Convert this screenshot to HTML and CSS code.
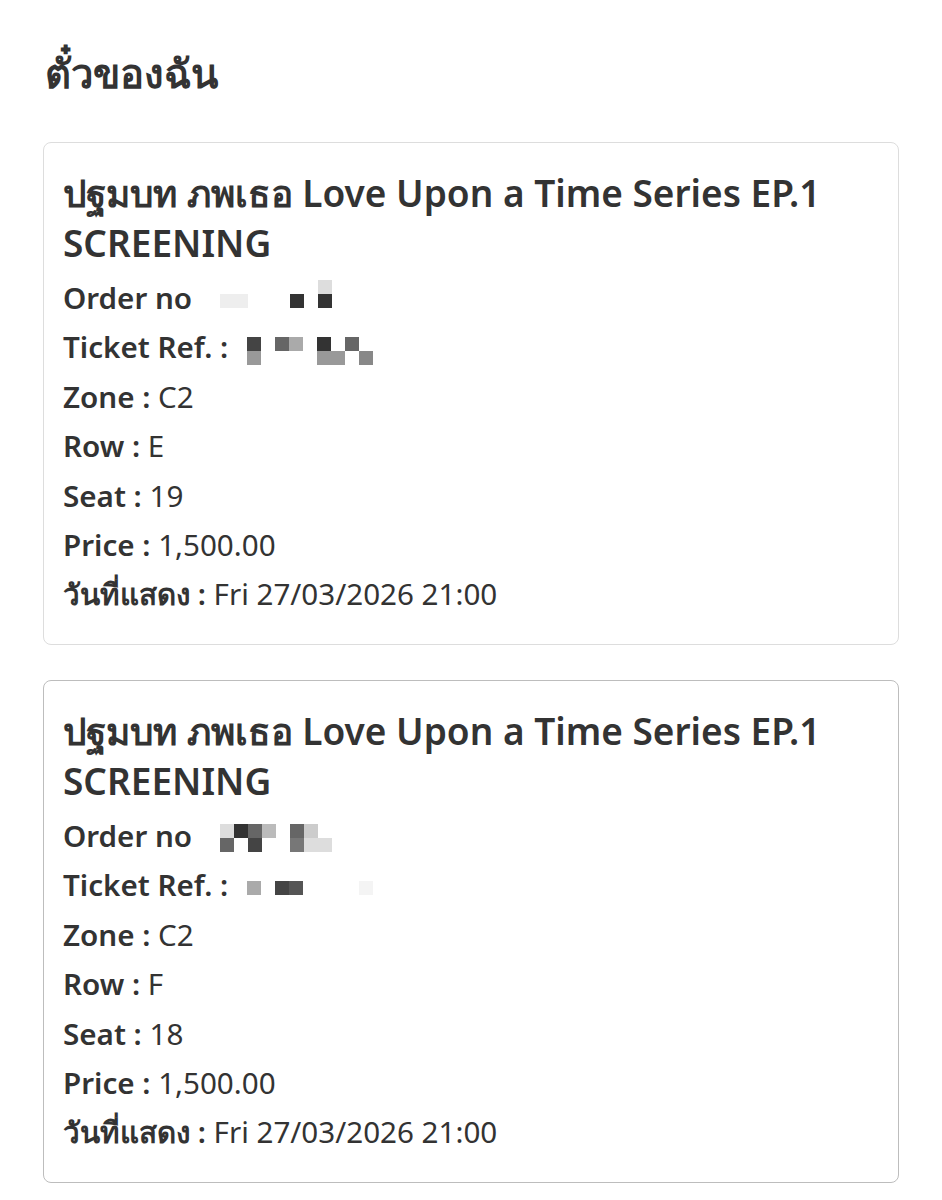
FILE: index.html
```html
<!DOCTYPE html>
<html lang="th">
<head>
<meta charset="utf-8">
<title>ตั๋วของฉัน</title>
<link rel="stylesheet" href="styles.css">
</head>
<body>
<main class="page">
  <h1 class="page-title">ตั๋วของฉัน</h1>

  <section class="ticket">
    <h2 class="ticket-title">ปฐมบท ภพเธอ Love Upon a Time Series EP.1 SCREENING</h2>
    <div class="row"><span class="label">Order no</span><span class="mosaic mosaic-order">
      <i></i><i></i><i></i><i></i><i></i><i></i><i></i><i class="g-d"></i>
      <i class="g-e"></i><i class="g-e"></i><i></i><i></i><i></i><i class="g-3"></i><i></i><i class="g-3"></i>
    </span></div>
    <div class="row"><span class="label">Ticket Ref. :</span><span class="mosaic mosaic-ref">
      <i class="g-4"></i><i></i><i class="g-6"></i><i class="g-a"></i><i></i><i class="g-3"></i><i></i><i class="g-6"></i><i></i>
      <i class="g-9"></i><i></i><i></i><i></i><i></i><i class="g-9"></i><i class="g-9"></i><i></i><i class="g-8"></i>
    </span></div>
    <div class="row"><span class="label">Zone :</span> C2</div>
    <div class="row"><span class="label">Row :</span> E</div>
    <div class="row"><span class="label">Seat :</span> 19</div>
    <div class="row"><span class="label">Price :</span> 1,500.00</div>
    <div class="row"><span class="label">วันที่แสดง :</span> Fri 27/03/2026 21:00</div>
  </section>

  <section class="ticket ticket-active">
    <h2 class="ticket-title">ปฐมบท ภพเธอ Love Upon a Time Series EP.1 SCREENING</h2>
    <div class="row"><span class="label">Order no</span><span class="mosaic mosaic-order2">
      <i class="g-d"></i><i class="g-3"></i><i class="g-6"></i><i class="g-b"></i><i></i><i class="g-6"></i><i class="g-c"></i><i></i>
      <i class="g-6"></i><i></i><i class="g-4"></i><i></i><i></i><i class="g-7"></i><i class="g-d"></i><i class="g-d"></i>
    </span></div>
    <div class="row"><span class="label">Ticket Ref. :</span><span class="mosaic mosaic-ref2">
      <i class="g-a"></i><i></i><i class="g-4"></i><i class="g-5"></i><i></i><i></i><i></i><i></i><i class="g-f"></i>
    </span></div>
    <div class="row"><span class="label">Zone :</span> C2</div>
    <div class="row"><span class="label">Row :</span> F</div>
    <div class="row"><span class="label">Seat :</span> 18</div>
    <div class="row"><span class="label">Price :</span> 1,500.00</div>
    <div class="row"><span class="label">วันที่แสดง :</span> Fri 27/03/2026 21:00</div>
  </section>
</main>
</body>
</html>
```

FILE: styles.css
```css
* { box-sizing: border-box; }

html, body {
  margin: 0;
  padding: 0;
  background: #ffffff;
}

body {
  font-family: "Noto Sans", "Open Sans", "DejaVu Sans", sans-serif;
  color: #333333;
}

.page {
  padding: 48px 43px 0 43px;
  display: flex;
  flex-direction: column;
  gap: 35px;
}

.page-title {
  margin: 0 0 9px 2px;
  font-size: 40px;
  line-height: 50px;
  font-weight: 700;
  color: #333333;
}

.ticket {
  border: 1px solid #dddddd;
  border-radius: 8px;
  padding: 25px 19px 26px 19px;
  height: 503px;
}

.ticket-active {
  border-color: #bdbdbd;
}

.ticket-title {
  margin: 0 0 5px 0;
  font-size: 37px;
  line-height: 50px;
  font-weight: 600;
  color: #333333;
}

.row {
  height: 49.4px;
  font-size: 29.6px;
  line-height: 49.4px;
  font-weight: 400;
  color: #333333;
  white-space: nowrap;
}

.label {
  font-weight: 600;
}

.mosaic {
  display: inline-grid;
  grid-template-rows: 14px 14px;
  grid-auto-rows: 14px;
}

.mosaic i {
  display: block;
  width: 14px;
  height: 14px;
}

.mosaic-order { grid-template-columns: repeat(8, 14px); margin-left: 28px; vertical-align: 15px; }
.mosaic-ref { grid-template-columns: repeat(9, 14px); margin-left: 19px; vertical-align: 7px; }
.mosaic-order2 { grid-template-columns: repeat(8, 14px); margin-left: 28px; vertical-align: 9px; }
.mosaic-ref2 { grid-template-columns: repeat(9, 14px); grid-template-rows: 14px; margin-left: 19px; vertical-align: 1px; }

.g-3 { background: #333333; }
.g-4 { background: #444444; }
.g-5 { background: #555555; }
.g-6 { background: #666666; }
.g-7 { background: #777777; }
.g-8 { background: #888888; }
.g-9 { background: #999999; }
.g-a { background: #aaaaaa; }
.g-b { background: #bbbbbb; }
.g-c { background: #cccccc; }
.g-d { background: #dddddd; }
.g-e { background: #eeeeee; }
.g-f { background: #f4f4f4; }
```
